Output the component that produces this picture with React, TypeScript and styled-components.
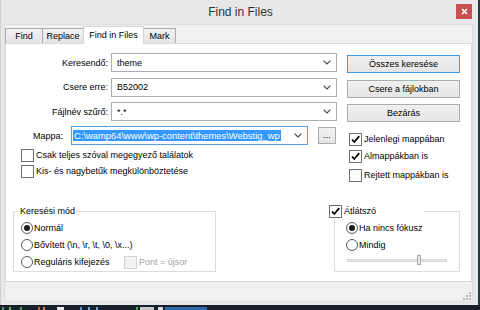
import React from "react"
import styled, { createGlobalStyle } from "styled-components"

const GlobalStyle = createGlobalStyle`
  html, body {
    margin: 0;
    padding: 0;
  }
  body {
    width: 480px;
    height: 310px;
    overflow: hidden;
    background: #1d2733;
    font-family: "Liberation Sans", Arial, sans-serif;
    font-size: 9px;
    color: #000;
  }
`

const Screen = styled.div`
  width: 480px;
  height: 310px;
  display: flex;
  flex-direction: column;
`

const DesktopRow = styled.div`
  display: flex;
  height: 305px;
`

const Window = styled.div`
  width: 478px;
  height: 305px;
  box-sizing: border-box;
  border-left: 1px solid #cfcfcf;
  background: #e8e8e8;
  display: flex;
  flex-direction: column;
`

const DesktopEdge = styled.div`
  flex: 1;
  background: #2a3540;
`

const TitleBar = styled.div`
  height: 24px;
  display: grid;
  grid-template-columns: 1fr auto 1fr;
  align-items: center;
`

const Title = styled.div`
  grid-column: 2;
  font-size: 12px;
  color: #333;
  padding-left: 2px;
`

const CloseButton = styled.div`
  grid-column: 3;
  justify-self: end;
  margin-right: 6px;
  margin-top: -1px;
  width: 16px;
  height: 15px;
  background: #c75050;
  display: flex;
  align-items: center;
  justify-content: center;
`

const Client = styled.div`
  flex: 1;
  margin: 0 5px 3px 3px;
  border: 1px solid #dedede;
  background: #f0f0f0;
  display: flex;
  flex-direction: column;
`

const TabBar = styled.div`
  height: 18px;
  display: flex;
  align-items: flex-end;
`

const Tab = styled.div<{ $w: number; $active?: boolean }>`
  box-sizing: border-box;
  width: ${(p) => p.$w}px;
  height: ${(p) => (p.$active ? 18 : 15)}px;
  margin-bottom: ${(p) => (p.$active ? -1 : 0)}px;
  margin-left: -1px;
  position: relative;
  z-index: ${(p) => (p.$active ? 2 : 1)};
  border: 1px solid ${(p) => (p.$active ? "#d4d4d4" : "#acacac")};
  border-bottom: none;
  background: ${(p) =>
    p.$active ? "#fff" : "linear-gradient(#f2f2f2, #e3e3e3)"};
  display: flex;
  align-items: center;
  justify-content: center;
  padding-bottom: ${(p) => (p.$active ? 2 : 0)}px;
  &:first-child {
    margin-left: 0;
  }
`

const Panel = styled.div`
  flex: 1;
  background: #fff;
  border: 1px solid #d9d9d9;
  display: flex;
  flex-direction: column;
`

const TopSection = styled.div`
  display: grid;
  grid-template-columns: 336px 113px;
  column-gap: 5px;
  padding-top: 9px;
`

const LeftColumn = styled.div`
  display: flex;
  flex-direction: column;
`

const FieldGrid = styled.div`
  display: grid;
  grid-template-columns: 102px 226px;
  column-gap: 3px;
  row-gap: 5.5px;
  align-items: center;
`

const FieldLabel = styled.div`
  text-align: right;
`

const Combo = styled.div<{ $focused?: boolean }>`
  box-sizing: border-box;
  height: 19px;
  border: 1px solid ${(p) => (p.$focused ? "#569de5" : "#abadb3")};
  background: #fff;
  display: flex;
  align-items: center;
  padding: 0 5px 0 ${(p) => (p.$focused ? 1 : 5)}px;
`

const ComboText = styled.span`
  flex: 1;
  white-space: nowrap;
  overflow: hidden;
`

const Selected = styled.span`
  background: #3399ff;
  color: #fff;
  padding: 1px 1px;
  font-size: 9.4px;
`

const PathRow = styled.div`
  display: flex;
  align-items: center;
  margin-top: 5px;
`

const PathLabel = styled.div`
  width: 57px;
  text-align: right;
  margin-right: 8px;
`

const PathCombo = styled(Combo)`
  width: 237px;
  margin-right: 10px;
`

const Button = styled.div<{ $primary?: boolean; $small?: boolean }>`
  box-sizing: border-box;
  height: ${(p) => (p.$small ? 17 : 18)}px;
  width: ${(p) => (p.$small ? "18px" : "auto")};
  border: 1px solid ${(p) => (p.$primary ? "#3c9ae6" : "#acacac")};
  background: linear-gradient(#f0f0f0, #e5e5e5);
  display: flex;
  align-items: center;
  justify-content: center;
  padding-bottom: ${(p) => (p.$small ? 2 : 0)}px;
`

const Options = styled.div`
  display: flex;
  flex-direction: column;
  margin-top: 2px;
  padding-left: 15px;
`

const CheckRow = styled.label<{ $h?: number; $gapTop?: number }>`
  display: flex;
  align-items: center;
  height: ${(p) => p.$h ?? 16}px;
  margin-top: ${(p) => p.$gapTop ?? 0}px;
  white-space: nowrap;
`

const Box = styled.span<{ $disabled?: boolean }>`
  box-sizing: border-box;
  width: 13px;
  height: 13px;
  margin-right: 2px;
  border: 1px solid ${(p) => (p.$disabled ? "#d2d2d2" : "#707070")};
  background: ${(p) => (p.$disabled ? "#f2f2f2" : "#fff")};
  display: flex;
  align-items: center;
  justify-content: center;
  flex-shrink: 0;
`

const Dim = styled.span`
  color: #a3a3a3;
`

const RightColumn = styled.div`
  display: flex;
  flex-direction: column;
  padding-top: 2px;
`

const ButtonStack = styled.div`
  display: flex;
  flex-direction: column;
  gap: 6.5px;
`

const SideChecks = styled.div`
  display: flex;
  flex-direction: column;
  margin-top: 8.5px;
  padding-left: 2px;
`

const BottomSection = styled.div`
  margin-top: auto;
  display: flex;
  justify-content: space-between;
  align-items: flex-end;
  padding: 0 11px 9px 7px;
`

const GroupBox = styled.div<{ $w: number; $pad: number }>`
  position: relative;
  box-sizing: border-box;
  width: ${(p) => p.$w}px;
  height: 61px;
  border: 1px solid #dcdcdc;
  padding: 8px 0 0 ${(p) => p.$pad}px;
  display: flex;
  flex-direction: column;
  gap: 1px;
`

const Caption = styled.div<{ $left: number; $w?: number }>`
  position: absolute;
  top: -7px;
  left: ${(p) => p.$left}px;
  width: ${(p) => (p.$w ? `${p.$w}px` : "auto")};
  height: 13px;
  background: #fff;
  padding: 0 1px;
  display: flex;
  align-items: center;
  line-height: 13px;
`

const RadioRow = styled.div`
  display: flex;
  align-items: center;
  height: 16px;
  white-space: nowrap;
`

const RadioCell = styled.div`
  display: flex;
  align-items: center;
  width: 103px;
`

const Radio = styled.span<{ $on?: boolean }>`
  box-sizing: border-box;
  width: 12px;
  height: 12px;
  border-radius: 50%;
  border: 1px solid #5a5a5a;
  background: #fff;
  margin-right: 1px;
  display: flex;
  align-items: center;
  justify-content: center;
  flex-shrink: 0;
  &::after {
    content: "";
    width: 6px;
    height: 6px;
    border-radius: 50%;
    background: ${(p) => (p.$on ? "#1a1a1a" : "transparent")};
  }
`

const Slider = styled.div`
  position: relative;
  width: 100px;
  height: 11px;
  margin: 1px 0 0 1px;
  display: flex;
  align-items: center;
`

const Track = styled.div`
  width: 100%;
  height: 3px;
  box-sizing: border-box;
  background: #e7e7e7;
  border: 1px solid #d6d6d6;
`

const Thumb = styled.div`
  position: absolute;
  top: 0;
  left: 70px;
  width: 4px;
  height: 10px;
  box-sizing: border-box;
  border: 1px solid #a8a8a8;
  background: #ececec;
`

const Footer = styled.div`
  height: 18px;
  display: flex;
  justify-content: flex-end;
  align-items: flex-end;
  padding: 0 1px 1px 0;
`

const Taskbar = styled.div`
  height: 5px;
  background: #17212c;
  display: flex;
  align-items: flex-end;
`

const TaskChip = styled.div<{ $w: number; $c: string; $ml: number }>`
  width: ${(p) => p.$w}px;
  height: 3px;
  margin-left: ${(p) => p.$ml}px;
  background: ${(p) => p.$c};
`

const Chevron = () => (
  <svg width="8" height="5" viewBox="0 0 8 5">
    <path d="M0.6 0.6 L4 4 L7.4 0.6" fill="none" stroke="#444" strokeWidth="1.1" />
  </svg>
)

const Check = () => (
  <svg width="11" height="11" viewBox="0 0 11 11">
    <path d="M2 5.5 L4.3 8 L9.2 2.2" fill="none" stroke="#000" strokeWidth="1.8" />
  </svg>
)

const Grip = () => (
  <svg width="8" height="8" viewBox="0 0 8 8" fill="#b5b5b5">
    <rect x="6" y="0" width="2" height="2" />
    <rect x="3" y="3" width="2" height="2" />
    <rect x="6" y="3" width="2" height="2" />
    <rect x="0" y="6" width="2" height="2" />
    <rect x="3" y="6" width="2" height="2" />
    <rect x="6" y="6" width="2" height="2" />
  </svg>
)

const CheckItem: React.FC<{
  label: string
  checked?: boolean
  disabled?: boolean
  h?: number
  gapTop?: number
}> = ({ label, checked, disabled, h, gapTop }) => (
  <CheckRow $h={h} $gapTop={gapTop}>
    <Box $disabled={disabled}>{checked && <Check />}</Box>
    {disabled ? <Dim>{label}</Dim> : label}
  </CheckRow>
)

const fields = [
  { label: "Keresendő:", value: "theme" },
  { label: "Csere erre:", value: "B52002" },
  { label: "Fájlnév szűrő:", value: "*.*" },
]

const tabs = [
  { name: "Find", w: 38 },
  { name: "Replace", w: 42 },
  { name: "Find in Files", w: 61, active: true },
  { name: "Mark", w: 33 },
]

const chips = [
  { w: 2, c: "#4f9a4f", ml: 2 },
  { w: 2, c: "#6fae5a", ml: 5 },
  { w: 2, c: "#4a9e5c", ml: 9 },
  { w: 2, c: "#c85a3a", ml: 16 },
  { w: 2, c: "#e07a40", ml: 3 },
  { w: 7, c: "#e8e8e8", ml: 12 },
  { w: 2, c: "#5c8ec8", ml: 16 },
  { w: 2, c: "#6e9bd0", ml: 6 },
  { w: 2, c: "#6e9bd0", ml: 6 },
  { w: 2, c: "#4fa04f", ml: 38 },
  { w: 14, c: "#c8c8c8", ml: 2 },
  { w: 5, c: "#dcdcdc", ml: 4 },
  { w: 42, c: "#2f6aa8", ml: 2 },
]

export default function App() {
  return (
    <Screen>
      <GlobalStyle />
      <DesktopRow>
        <Window>
          <TitleBar>
            <Title>Find in Files</Title>
            <CloseButton>
              <svg width="7" height="7" viewBox="0 0 7 7">
                <path d="M1 1 L6 6 M6 1 L1 6" stroke="#fff" strokeWidth="1.6" />
              </svg>
            </CloseButton>
          </TitleBar>
          <Client>
            <TabBar>
              {tabs.map((t) => (
                <Tab key={t.name} $w={t.w} $active={t.active}>
                  {t.name}
                </Tab>
              ))}
            </TabBar>
            <Panel>
              <TopSection>
                <LeftColumn>
                  <FieldGrid>
                    {fields.map((f) => (
                      <React.Fragment key={f.label}>
                        <FieldLabel>{f.label}</FieldLabel>
                        <Combo>
                          <ComboText>{f.value}</ComboText>
                          <Chevron />
                        </Combo>
                      </React.Fragment>
                    ))}
                  </FieldGrid>
                  <PathRow>
                    <PathLabel>Mappa:</PathLabel>
                    <PathCombo $focused>
                      <ComboText>
                        <Selected>C:\wamp64\www\wp-content\themes\Webstig_wp</Selected>
                      </ComboText>
                      <Chevron />
                    </PathCombo>
                    <Button $small>...</Button>
                  </PathRow>
                  <Options>
                    <CheckItem label="Csak teljes szóval megegyező találatok" />
                    <CheckItem label="Kis- és nagybetűk megkülönböztetése" />
                  </Options>
                </LeftColumn>
                <RightColumn>
                  <ButtonStack>
                    <Button $primary>Összes keresése</Button>
                    <Button>Csere a fájlokban</Button>
                    <Button>Bezárás</Button>
                  </ButtonStack>
                  <SideChecks>
                    <CheckItem label="Jelenlegi mappában" checked h={17} />
                    <CheckItem label="Almappákban is" checked h={17} />
                    <CheckItem label="Rejtett mappákban is" h={17} gapTop={2} />
                  </SideChecks>
                </RightColumn>
              </TopSection>
              <BottomSection>
                <GroupBox $w={203} $pad={7}>
                  <Caption $left={5}>Keresési mód</Caption>
                  <RadioRow>
                    <Radio $on />
                    Normál
                  </RadioRow>
                  <RadioRow>
                    <Radio />
                    Bővített (\n, \r, \t, \0, \x...)
                  </RadioRow>
                  <RadioRow>
                    <RadioCell>
                      <Radio />
                      Reguláris kifejezés
                    </RadioCell>
                    <CheckItem label="Pont = újsor" disabled />
                  </RadioRow>
                </GroupBox>
                <GroupBox $w={126} $pad={11}>
                  <Caption $left={-7} $w={94}>
                    <CheckItem label="Átlátszó" checked />
                  </Caption>
                  <RadioRow>
                    <Radio $on />
                    Ha nincs fókusz
                  </RadioRow>
                  <RadioRow>
                    <Radio />
                    Mindig
                  </RadioRow>
                  <Slider>
                    <Track />
                    <Thumb />
                  </Slider>
                </GroupBox>
              </BottomSection>
            </Panel>
            <Footer>
              <Grip />
            </Footer>
          </Client>
        </Window>
        <DesktopEdge />
      </DesktopRow>
      <Taskbar>
        {chips.map((c, i) => (
          <TaskChip key={i} $w={c.w} $c={c.c} $ml={c.ml} />
        ))}
      </Taskbar>
    </Screen>
  )
}
